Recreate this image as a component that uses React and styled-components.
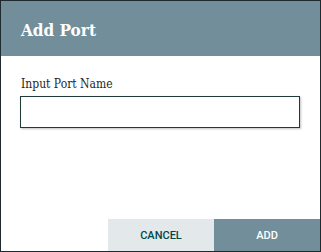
import React from "react";
import styled, { createGlobalStyle } from "styled-components";

const Global = createGlobalStyle`
  html, body { margin: 0; padding: 0; background: #fff; }
  * { box-sizing: border-box; }
`;

const Dialog = styled.div`
  width: 321px;
  height: 252px;
  border: 1px solid #1f2a2e;
  background: #fff;
  display: flex;
  flex-direction: column;
`;

const Header = styled.div`
  height: 55px;
  background: #728e9b;
  display: flex;
  align-items: center;
  padding-left: 20px;
  padding-top: 2px;
`;

const Title = styled.h1`
  margin: 0;
  color: #fff;
  font-family: "DejaVu Serif Condensed", "DejaVu Serif", serif;
  font-stretch: condensed;
  font-weight: bold;
  font-size: 17px;
`;

const Body = styled.div`
  flex: 1;
  padding: 20px 20px 0 19px;
  display: flex;
  flex-direction: column;
`;

const Label = styled.label`
  font-family: "DejaVu Serif Condensed", "DejaVu Serif", serif;
  font-stretch: condensed;
  font-size: 12px;
  color: #262626;
  line-height: 16px;
  margin-bottom: 4px;
  padding-left: 1px;
`;

const Input = styled.input`
  width: 280px;
  height: 32px;
  border: 1px solid #1e3a3a;
  background: #fff;
  box-shadow: 1px 1px 2px rgba(0, 0, 0, 0.25);
  outline: none;
  padding: 0 8px;
`;

const Footer = styled.div`
  display: flex;
  justify-content: flex-end;
`;

const Button = styled.button`
  width: 106px;
  height: 32px;
  border: none;
  margin: 0;
  font-family: Roboto, "Liberation Sans", sans-serif;
  font-weight: 500;
  font-size: 11px;
  text-transform: uppercase;
  background: ${(p) => (p.$primary ? "#728e9b" : "#e3e8eb")};
  color: ${(p) => (p.$primary ? "#fff" : "#004849")};
`;

export default function App() {
  return (
    <>
      <Global />
      <Dialog>
        <Header>
          <Title>Add Port</Title>
        </Header>
        <Body>
          <Label>Input Port Name</Label>
          <Input />
        </Body>
        <Footer>
          <Button>Cancel</Button>
          <Button $primary>Add</Button>
        </Footer>
      </Dialog>
    </>
  );
}
